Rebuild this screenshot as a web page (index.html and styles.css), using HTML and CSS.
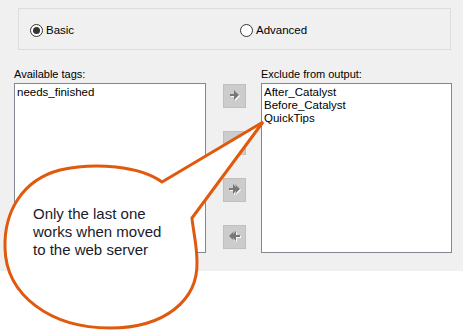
FILE: index.html
```html
<!DOCTYPE html>
<html lang="en">
<head>
    <meta charset="UTF-8">
    <title>Tag filter</title>
    <link rel="stylesheet" href="styles.css">
</head>
<body>

    <div class="panel">
        <!-- Mode selection -->
        <div class="mode-box">
            <label class="radio"><span class="dot checked"></span>Basic</label>
            <label class="radio"><span class="dot"></span>Advanced</label>
        </div>

        <!-- Tag lists -->
        <div class="lists">
            <div class="list-col">
                <div class="list-label">Available tags:</div>
                <div class="listbox">
                    <div>needs_finished</div>
                </div>
            </div>

            <div class="buttons">
                <button class="move-btn" title="Add">
                    <svg width="16" height="16" viewBox="0 0 16 16">
                        <path d="M4 7h4v-4l5 5-5 5v-4h-4z" fill="#fff"/>
                        <path d="M3 6h4v-4l5 5-5 5v-4h-4z" fill="#777"/>
                    </svg>
                </button>
                <button class="move-btn" title="Remove">
                    <svg width="16" height="16" viewBox="0 0 16 16">
                        <path d="M13 7h-4v-4l-5 5 5 5v-4h4z" fill="#fff"/>
                        <path d="M12 6h-4v-4l-5 5 5 5v-4h4z" fill="#777"/>
                    </svg>
                </button>
                <button class="move-btn" title="Add all">
                    <svg width="16" height="16" viewBox="0 0 16 16">
                        <path d="M2 6h4v-4l5 5-5 5v-4h-4z M8 2l5 5-5 5 2-5z" fill="#fff" transform="translate(1 1)"/>
                        <path d="M1 5h4v-4l5 5-5 5v-4h-4z M7 1l5 5-5 5 2-5z" fill="#777" transform="translate(1 1)"/>
                    </svg>
                </button>
                <button class="move-btn" title="Remove all">
                    <svg width="16" height="16" viewBox="0 0 16 16">
                        <path d="M14 6h-4v-4l-5 5 5 5v-4h4z M8 2l-5 5 5 5-2-5z" fill="#fff" transform="translate(0 1)"/>
                        <path d="M13 5h-4v-4l-5 5 5 5v-4h4z M7 1l-5 5 5 5-2-5z" fill="#777" transform="translate(0 1)"/>
                    </svg>
                </button>
            </div>

            <div class="list-col right">
                <div class="list-label">Exclude from output:</div>
                <div class="listbox">
                    <div>After_Catalyst</div>
                    <div>Before_Catalyst</div>
                    <div>QuickTips</div>
                </div>
            </div>
        </div>
    </div>

    <!-- Callout drawn over the dialog -->
    <div class="callout">
        <svg width="463" height="336" viewBox="0 0 463 336">
            <path d="M162 182 C 140 166, 95 162, 60 170 C 22 180, 4 212, 5 248 C 6 295, 50 328, 110 328 C 165 328, 198 300, 197 262 C 197 245, 193 230, 192 218 L 263 122 Z"
                  fill="#fff" stroke="#e0590c" stroke-width="3" stroke-linejoin="miter"/>
        </svg>
        <p class="callout-text">Only the last one<br>works when moved<br>to the web server</p>
    </div>

</body>
</html>
```

FILE: styles.css
```css
html, body {
    height: 336px;
    overflow: hidden;
}

body {
    margin: 0;
    padding: 0;
    background-color: #fff;
    font-family: "Liberation Sans", Arial, sans-serif;
    font-size: 11px;
    color: #000;
    position: relative;
}

/* Dialog panel */
.panel {
    background-color: #f0f0f0;
    height: 271px;
    padding: 8px 12px 0 14px;
    box-sizing: border-box;
}

.mode-box {
    margin-left: 4px;
    width: 433px;
    height: 42px;
    box-sizing: border-box;
    border: 1px solid #dcdcdc;
    display: flex;
    align-items: center;
    padding: 2px 0 0 11px;
}

.radio {
    display: flex;
    align-items: center;
    width: 228px;
    font-size: 11.5px;
}

.dot {
    width: 11px;
    height: 11px;
    border: 1px solid #333;
    border-radius: 50%;
    background: #fff;
    margin-right: 3px;
    position: relative;
}

.dot.checked::after {
    content: "";
    position: absolute;
    left: 2px;
    top: 2px;
    width: 7px;
    height: 7px;
    border-radius: 50%;
    background: #333;
}

/* Lists */
.lists {
    display: flex;
    margin-top: 18px;
}

.list-label {
    height: 13px;
    line-height: 13px;
    margin-bottom: 2px;
}

.listbox {
    width: 192px;
    height: 170px;
    box-sizing: border-box;
    border: 1px solid #828790;
    background: #fff;
    padding: 2px 2px;
    line-height: 13px;
    font-size: 11.5px;
}

.right .listbox {
    width: 191px;
}

.buttons {
    display: flex;
    flex-direction: column;
    gap: 23px;
    margin: 16px 15px 0 17px;
}

.move-btn {
    width: 23px;
    height: 24px;
    padding: 0;
    background-color: #cccccc;
    border: 1px solid #bfbfbf;
    display: flex;
    align-items: center;
    justify-content: center;
}

/* Callout */
.callout {
    position: absolute;
    left: 0;
    top: 0;
    width: 463px;
    height: 336px;
}

.callout svg {
    display: block;
}

.callout-text {
    position: absolute;
    left: 33px;
    top: 205px;
    margin: 0;
    font-size: 15px;
    line-height: 18px;
    color: #1a1a2a;
}
```
